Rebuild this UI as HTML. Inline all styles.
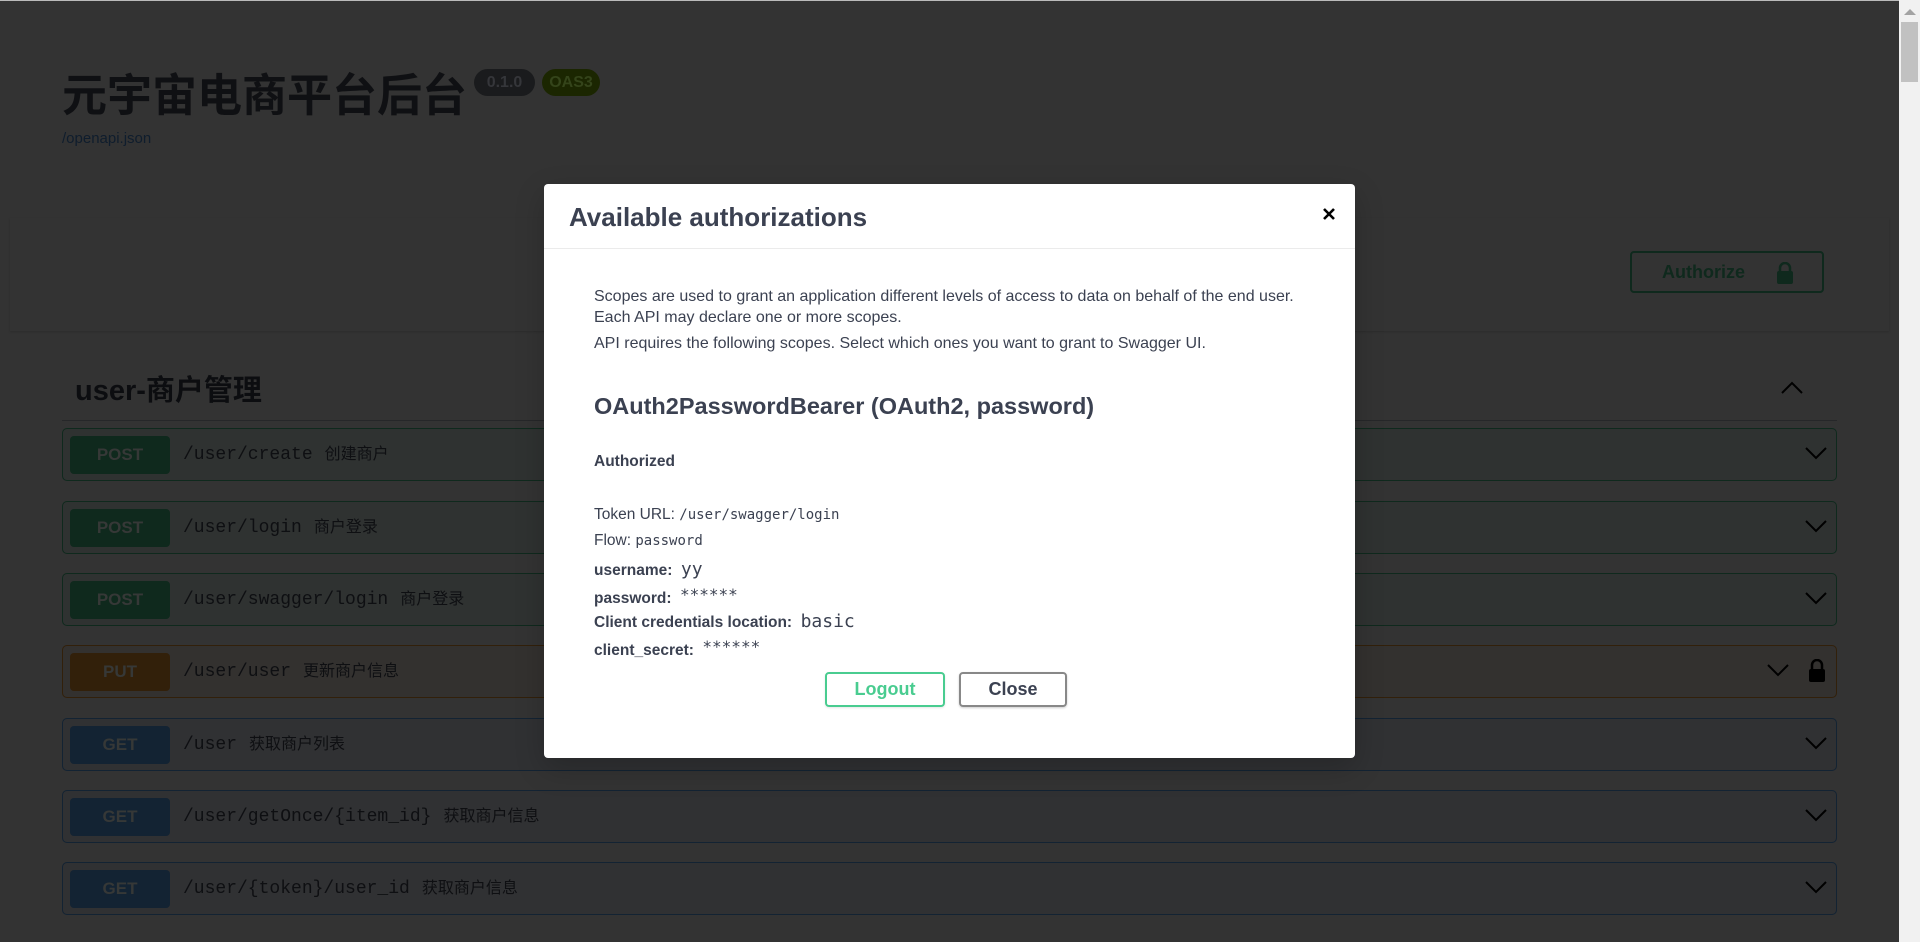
<!DOCTYPE html>
<html><head><meta charset="utf-8"><style>
*{margin:0;padding:0;box-sizing:border-box}
body{width:1920px;height:942px;overflow:hidden;background:#333;font-family:"Liberation Sans","Noto Sans CJK SC",sans-serif;position:relative}
.a{position:absolute;white-space:nowrap}
.row{position:absolute;left:62px;width:1775px;height:53px;border:1px solid;border-radius:5px}
.badge{position:absolute;left:7px;top:7px;width:100px;height:38px;border-radius:4px;color:#363837;font-weight:bold;font-size:17px;line-height:38px;text-align:center}
.path{position:absolute;left:120px;top:0;line-height:51px;font-family:"Liberation Mono",monospace;font-size:18px;color:#0e0f12}
.path span{font-family:"Liberation Sans","Noto Sans CJK SC",sans-serif;font-size:16px;margin-left:12px}
.chev{position:absolute;right:8px;top:16px}
.m{position:absolute;left:594px;white-space:nowrap;color:#3b4151}
.lbl{font-weight:bold;font-size:15.5px}
.mono{font-family:"DejaVu Sans Mono",monospace}
</style></head><body>
<div class="a" style="left:0;top:0;width:1899px;height:1px;background:#bbb"></div>
<div class="a" style="left:62px;top:66px;font-size:45px;font-weight:bold;color:#0f1013;line-height:60px">元宇宙电商平台后台</div>
<div class="a" style="left:474px;top:69px;width:61px;height:27px;border-radius:14px;background:#1a1b1d;color:#35363a;font-size:16px;line-height:27px;text-align:center;font-weight:bold">0.1.0</div>
<div class="a" style="left:542px;top:69px;width:58px;height:27px;border-radius:14px;background:#1b2601;color:#34441a;font-size:16px;line-height:27px;text-align:center;font-weight:bold">OAS3</div>
<div class="a" style="left:62px;top:130px;font-size:15px;color:#0f1d2d">/openapi.json</div>
<div class="a" style="left:10px;top:218px;width:1879px;height:113px;background:#333;box-shadow:0 1px 2px rgba(0,0,0,.15)"></div>
<div class="a" style="left:1630px;top:251px;width:194px;height:42px;border:2px solid #0f291d;border-radius:4px;color:#0f291d;font-weight:bold;font-size:18px;line-height:38px;padding-left:30px">Authorize
<svg style="position:absolute;right:28px;top:9px" width="18" height="22" viewBox="0 0 18 22"><path d="M4 9V6a5 5 0 0110 0v3" fill="none" stroke="#0f291d" stroke-width="2.5"/><rect x="1" y="9" width="16" height="13" rx="2" fill="#0f291d"/></svg></div>
<div class="a" style="left:75px;top:371px;font-size:29px;font-weight:bold;color:#0c0d10;line-height:40px">user-商户管理</div>
<div class="a" style="left:62px;top:420px;width:1775px;height:1px;background:#262729"></div>
<svg class="a" style="left:1780px;top:380px" width="24" height="16" viewBox="0 0 24 16"><path d="M2 13L12 3l10 10" fill="none" stroke="#000" stroke-width="2"/></svg>

<div class="row" style="top:428px;background:#2f3231;border-color:#0f291d"><div class="badge" style="background:#0f291d">POST</div><div class="path">/user/create<span>创建商户</span></div><svg class="chev" width="24" height="16"><path d="M2 3l10 10L22 3" fill="none" stroke="#000" stroke-width="2"/></svg></div>
<div class="row" style="top:501px;background:#2f3231;border-color:#0f291d"><div class="badge" style="background:#0f291d">POST</div><div class="path">/user/login<span>商户登录</span></div><svg class="chev" width="24" height="16"><path d="M2 3l10 10L22 3" fill="none" stroke="#000" stroke-width="2"/></svg></div>
<div class="row" style="top:573px;background:#2f3231;border-color:#0f291d"><div class="badge" style="background:#0f291d">POST</div><div class="path">/user/swagger/login<span>商户登录</span></div><svg class="chev" width="24" height="16"><path d="M2 3l10 10L22 3" fill="none" stroke="#000" stroke-width="2"/></svg></div>
<div class="row" style="top:645px;background:#33312f;border-color:#32200a"><div class="badge" style="background:#32200a">PUT</div><div class="path">/user/user<span>更新商户信息</span></div><svg class="chev" style="right:46px" width="24" height="16"><path d="M2 3l10 10L22 3" fill="none" stroke="#000" stroke-width="2"/></svg><svg style="position:absolute;right:10px;top:13px" width="18" height="23" viewBox="0 0 18 23"><path d="M4 10V6a5 5 0 0110 0v4" fill="none" stroke="#000" stroke-width="2.5"/><rect x="1" y="10" width="16" height="13" rx="2" fill="#000"/></svg></div>
<div class="row" style="top:718px;background:#303133;border-color:#132333"><div class="badge" style="background:#132333">GET</div><div class="path">/user<span>获取商户列表</span></div><svg class="chev" width="24" height="16"><path d="M2 3l10 10L22 3" fill="none" stroke="#000" stroke-width="2"/></svg></div>
<div class="row" style="top:790px;background:#303133;border-color:#132333"><div class="badge" style="background:#132333">GET</div><div class="path">/user/getOnce/{item_id}<span>获取商户信息</span></div><svg class="chev" width="24" height="16"><path d="M2 3l10 10L22 3" fill="none" stroke="#000" stroke-width="2"/></svg></div>
<div class="row" style="top:862px;background:#303133;border-color:#132333"><div class="badge" style="background:#132333">GET</div><div class="path">/user/{token}/user_id<span>获取商户信息</span></div><svg class="chev" width="24" height="16"><path d="M2 3l10 10L22 3" fill="none" stroke="#000" stroke-width="2"/></svg></div>

<div class="a" style="left:1899px;top:0;width:21px;height:942px;background:#f1f1f1"></div>
<div class="a" style="left:1901px;top:22px;width:17px;height:60px;background:#c1c1c1"></div>
<svg class="a" style="left:1904px;top:9px" width="12" height="7"><path d="M0 6L6 0l6 6z" fill="#a3a3a3"/></svg>

<div class="a" style="left:544px;top:184px;width:811px;height:574px;background:#fff;border-radius:4px;box-shadow:0 10px 30px rgba(0,0,0,.2)"></div>
<div class="a" style="left:544px;top:248px;width:811px;height:1px;background:#ebebeb"></div>
<div class="m" style="left:569px;top:200px;font-size:26px;font-weight:600;line-height:34px">Available authorizations</div>
<svg class="a" style="left:1322px;top:207px" width="14" height="14" viewBox="0 0 14 14"><path d="M2 2l10 10M12 2L2 12" stroke="#000" stroke-width="2.6"/></svg>
<div class="m" style="top:287px;font-size:16px;line-height:20px">Scopes are used to grant an application different levels of access to data on behalf of the end user.</div>
<div class="m" style="top:308px;font-size:16px;line-height:20px">Each API may declare one or more scopes.</div>
<div class="m" style="top:334px;font-size:16px;line-height:20px">API requires the following scopes. Select which ones you want to grant to Swagger UI.</div>
<div class="m" style="top:391px;font-size:23.5px;font-weight:600;line-height:30px">OAuth2PasswordBearer (OAuth2, password)</div>
<div class="m lbl" style="top:452px;line-height:20px">Authorized</div>
<div class="m" style="top:505px;font-size:15.5px;line-height:20px">Token URL: <span class="mono" style="font-size:14px">/user/swagger/login</span></div>
<div class="m" style="top:531px;font-size:15.5px;line-height:20px">Flow: <span class="mono" style="font-size:14px">password</span></div>
<div class="m" style="top:560px;line-height:20px"><span class="lbl">username:</span> <span class="mono" style="font-size:18px;margin-left:4px">yy</span></div>
<div class="m" style="top:585px;line-height:20px"><span class="lbl">password:</span> <span class="mono" style="font-size:16px;margin-left:4px;vertical-align:3px">******</span></div>
<div class="m" style="top:612px;line-height:20px"><span class="lbl">Client credentials location:</span> <span class="mono" style="font-size:18px;margin-left:4px">basic</span></div>
<div class="m" style="top:637px;line-height:20px"><span class="lbl">client_secret:</span> <span class="mono" style="font-size:16px;margin-left:4px;vertical-align:3px">******</span></div>
<div class="a" style="left:825px;top:672px;width:120px;height:35px;border:2px solid #49cc90;border-radius:4px;color:#49cc90;font-weight:bold;font-size:18px;line-height:31px;text-align:center;box-shadow:0 1px 2px rgba(0,0,0,.1)">Logout</div>
<div class="a" style="left:959px;top:672px;width:108px;height:35px;border:2px solid #888;border-radius:4px;color:#3b4151;font-weight:bold;font-size:18px;line-height:31px;text-align:center;box-shadow:0 1px 2px rgba(0,0,0,.2)">Close</div>
</body></html>
